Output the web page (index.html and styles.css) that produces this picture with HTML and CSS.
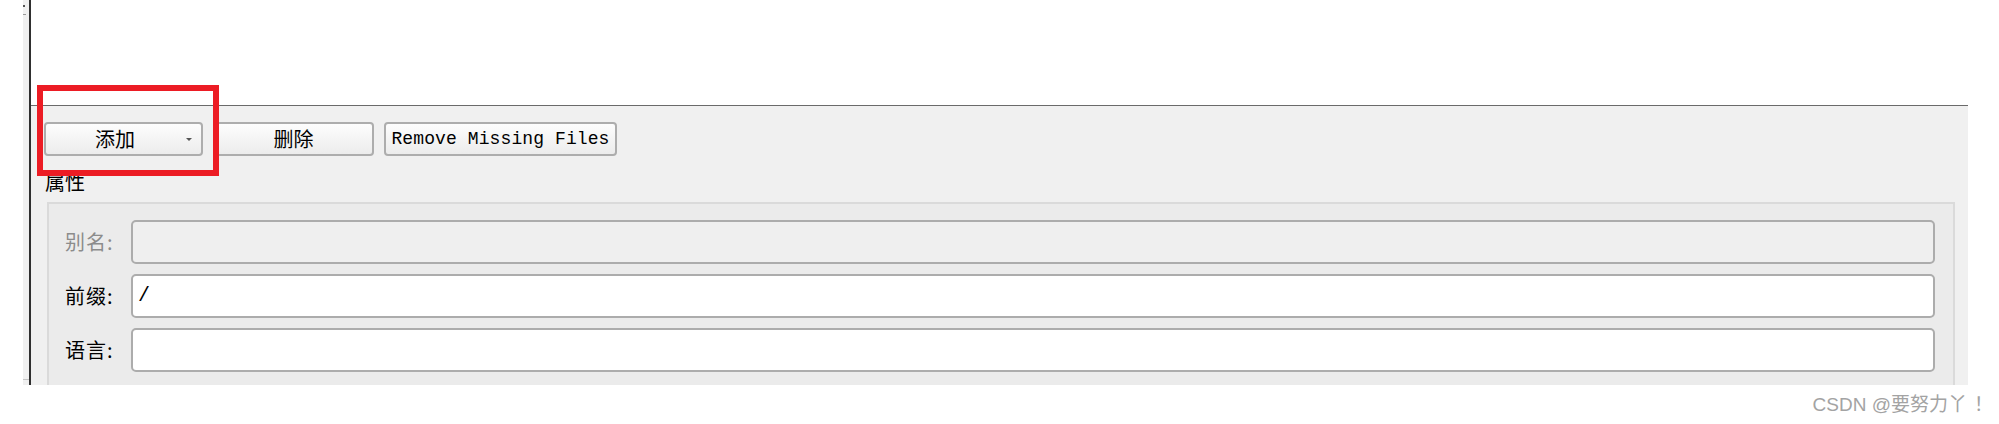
FILE: index.html
```html
<!DOCTYPE html>
<html lang="zh-CN">
<head>
<meta charset="utf-8">
<title>资源目录</title>
<link rel="stylesheet" href="styles.css">
</head>
<body>
<div class="frame">
  <div class="gutter">
    <span class="grip-dot"></span>
    <span class="grip-dash"></span>
    <span class="gutter-end"></span>
  </div>
  <div class="main">
    <div class="top"></div>
    <div class="panel">
      <div class="toolbar">
        <button class="btn btn-drop"><span class="btn-label">添加</span><span class="caret"></span></button>
        <button class="btn btn-del">删除</button>
        <button class="btn btn-mono">Remove Missing Files</button>
      </div>
      <div class="section-title">属性</div>
      <div class="fieldset">
        <div class="row is-disabled">
          <span class="row-label">别名:</span>
          <div class="field"></div>
        </div>
        <div class="row">
          <span class="row-label">前缀:</span>
          <div class="field">/</div>
        </div>
        <div class="row">
          <span class="row-label">语言:</span>
          <div class="field"></div>
        </div>
      </div>
    </div>
  </div>
  <div class="highlight"></div>
</div>
<div class="watermark">CSDN @要努力丫<span class="wm-bang">！</span></div>
</body>
</html>
```
FILE: styles.css
```css
html, body {
  margin: 0;
  padding: 0;
  background: #ffffff;
}

body {
  font-family: "Noto Sans CJK SC", "Noto Sans", sans-serif;
  color: #000;
}

.frame {
  position: relative;
  margin-left: 23px;
  width: 1945px;
  height: 385px;
  display: flex;
}

.gutter {
  width: 6px;
  background: #f0f0f0;
  border-right: 2px solid #2f2f2f;
  display: flex;
  flex-direction: column;
  align-items: flex-start;
}

.grip-dot {
  margin-top: 5px;
  width: 2px;
  height: 2px;
  background: #555;
}

.grip-dash {
  margin-top: 7px;
  width: 3px;
  height: 1px;
  background: #999;
}

.gutter-end {
  margin-top: auto;
  margin-bottom: 5px;
  width: 6px;
  height: 1px;
  background: #c4c4c4;
}

.main {
  flex: 1;
  display: flex;
  flex-direction: column;
  min-width: 0;
}

.top {
  height: 105px;
  background: #ffffff;
  border-bottom: 1px solid #6a6a6a;
  flex: none;
}

.panel {
  flex: 1;
  background: #f0f0f0;
  padding: 16px 0 0 13px;
  overflow: hidden;
}

.toolbar {
  display: flex;
  gap: 10px;
}

.btn {
  height: 34px;
  box-sizing: border-box;
  border: 2px solid #adadad;
  border-radius: 4px;
  background: linear-gradient(#fdfdfd, #ececec);
  font-family: "Noto Sans CJK SC", sans-serif;
  font-size: 20px;
  line-height: 28px;
  color: #000;
  padding: 0;
  margin: 0;
  display: flex;
  align-items: center;
  justify-content: center;
}

.btn-drop {
  width: 159px;
  justify-content: space-between;
}

.btn-label {
  flex: 1;
  text-align: center;
  padding-left: 2px;
}

.caret {
  width: 0;
  height: 0;
  border-left: 3px solid transparent;
  border-right: 3px solid transparent;
  border-top: 3px solid #555;
  margin-right: 9px;
  margin-left: 4px;
}

.btn-del {
  width: 161px;
}

.btn-mono {
  width: 233px;
  font-family: "Liberation Mono", monospace;
  font-size: 18px;
  letter-spacing: 0.1px;
}

.section-title {
  margin-top: 14px;
  font-size: 20px;
  line-height: 24px;
  padding-left: 1px;
}

.fieldset {
  margin: 8px 13px 0 3px;
  border: 2px solid #dadada;
  background: #ebebeb;
  padding: 16px 18px 20px 16px;
  display: flex;
  flex-direction: column;
  gap: 10px;
}

.row {
  display: flex;
  align-items: center;
  height: 44px;
}

.row-label {
  width: 66px;
  flex: none;
  font-size: 20px;
  line-height: 24px;
  letter-spacing: 1px;
  color: #000;
}

.is-disabled .row-label {
  color: #8c8c8c;
}

.field {
  flex: 1;
  height: 44px;
  box-sizing: border-box;
  border: 2px solid #acacac;
  border-radius: 5px;
  background: #ffffff;
  font-family: "Liberation Mono", monospace;
  font-size: 20px;
  line-height: 40px;
  padding-left: 5px;
  color: #000;
}

.is-disabled .field {
  background: #efefef;
}

.highlight {
  position: absolute;
  left: 14px;
  top: 85px;
  width: 182px;
  height: 91px;
  box-sizing: border-box;
  border: 6px solid #ec1c24;
  pointer-events: none;
}

.watermark {
  margin-top: 9px;
  padding-right: 6px;
  text-align: right;
  font-family: "Liberation Sans", "Noto Sans CJK SC", sans-serif;
  font-size: 19px;
  line-height: 22px;
  color: #a3a3a3;
}

.wm-bang {
  margin-left: 7px;
}
```
